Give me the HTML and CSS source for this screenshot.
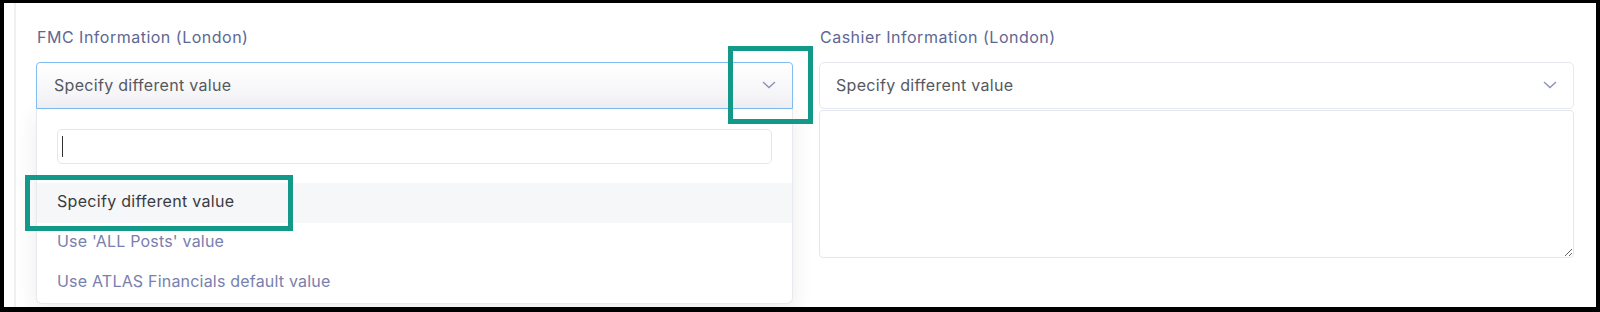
FILE: index.html
```html
<!DOCTYPE html>
<html lang="en">
<head>
  <meta charset="UTF-8" />
  <meta name="viewport" content="width=device-width, initial-scale=1.0" />
  <title>Post Settings – Financial Contacts</title>
  <link rel="stylesheet" href="styles.css">
</head>
<body>
  <div class="frame">
    <div class="content">
      <div class="form-grid">

        <div class="field">
          <label class="field-label">FMC Information (London)</label>
          <div class="select-wrap">
            <div class="select open">
              <span class="select-value">Specify different value</span>
              <svg class="chevron" width="14" height="8" viewBox="0 0 14 8"><path d="M1 1l6 5.5L13 1" fill="none" stroke="#8a90b8" stroke-width="1.3"/></svg>
            </div>
            <div class="dropdown">
              <div class="dropdown-search">
                <div class="search-input"><span class="caret"></span></div>
              </div>
              <ul class="options">
                <li class="option selected">Specify different value</li>
                <li class="option">Use 'ALL Posts' value</li>
                <li class="option">Use ATLAS Financials default value</li>
              </ul>
            </div>
            <!-- annotation boxes from the screenshot -->
            <div class="mark mark-chevron"></div>
            <div class="mark mark-option"></div>
          </div>
        </div>

        <div class="field">
          <label class="field-label">Cashier Information (London)</label>
          <div class="select">
            <span class="select-value">Specify different value</span>
            <svg class="chevron" width="14" height="8" viewBox="0 0 14 8"><path d="M1 1l6 5.5L13 1" fill="none" stroke="#8a90b8" stroke-width="1.3"/></svg>
          </div>
          <textarea class="details"></textarea>
        </div>

      </div>
    </div>
  </div>
</body>
</html>
```

FILE: styles.css
```css
* {
  box-sizing: border-box;
}
body {
  margin: 0;
  font-family: 'Inter', 'Noto Sans', sans-serif;
  background: #fff;
}
.frame {
  width: 1600px;
  height: 312px;
  border: 4px solid #000;
  border-top-width: 3px;
  border-bottom-width: 5px;
  overflow: hidden;
  background: #fff;
}
.content {
  height: 100%;
  margin-left: 10px;
  border-left: 2px solid #eeeff2;
  padding: 24px 22px 0 20px;
}
.form-grid {
  display: grid;
  grid-template-columns: 757px 755px;
  column-gap: 26px;
}
.field-label {
  display: block;
  font-size: 16px;
  line-height: 20px;
  letter-spacing: 0.5px;
  color: #5e6793;
  margin-bottom: 15px;
  padding-left: 1px;
}
.select-wrap {
  position: relative;
}
.select {
  height: 47px;
  display: flex;
  align-items: center;
  justify-content: space-between;
  padding: 0 16px 1px 16px;
  border: 1px solid #e6e8ef;
  border-radius: 5px;
  background: #fff;
  font-size: 16px;
  letter-spacing: 0.3px;
  color: #56585f;
}
.select.open {
  padding-left: 17px;
  border-color: #7fbdf3;
  border-radius: 4px 4px 0 0;
  background: linear-gradient(#ffffff, #f1f1f5);
}
.dropdown {
  position: absolute;
  top: 47px;
  left: 0;
  right: 0;
  z-index: 5;
  background: #fff;
  border: 1px solid #e8e9ef;
  border-top: none;
  border-radius: 0 0 6px 6px;
  box-shadow: 0 6px 22px rgba(40, 44, 70, 0.09);
}
.dropdown-search {
  padding: 20px 20px 19px 20px;
}
.search-input {
  height: 35px;
  border: 1px solid #e5e7ee;
  border-radius: 5px;
  padding: 6px 4px;
}
.caret {
  display: block;
  width: 1px;
  height: 21px;
  background: #333;
}
.options {
  list-style: none;
  margin: 0;
  padding: 0;
}
.option {
  height: 40px;
  line-height: 37px;
  padding-left: 20px;
  font-size: 16px;
  letter-spacing: 0.2px;
  color: #7880ad;
}
.option.selected {
  background: #f6f7f9;
  color: #3a3b40;
  letter-spacing: 0.3px;
}
.details {
  display: block;
  width: 100%;
  height: 148px;
  margin-top: 1px;
  border: 1px solid #e5e7ee;
  border-radius: 4px;
  resize: both;
  font-family: inherit;
}
.mark {
  position: absolute;
  z-index: 10;
  border: 5px solid #12998a;
}
.mark-chevron {
  left: 692px;
  top: -16px;
  width: 85px;
  height: 78px;
}
.mark-option {
  left: -11px;
  top: 113px;
  width: 268px;
  height: 56px;
}
```
